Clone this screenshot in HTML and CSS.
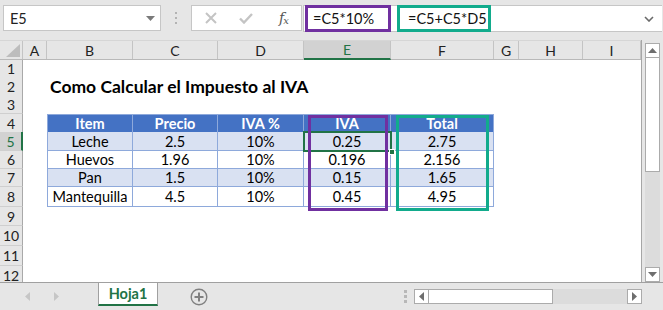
FILE: index.html
```html
<!DOCTYPE html>
<html lang="es">
<head>
<meta charset="utf-8">
<title>Como Calcular el Impuesto al IVA</title>
<link rel="stylesheet" href="styles.css">
</head>
<body>
<div class="app">
  <div class="topbar">
    <div class="namebox">
      <span class="nb-text">E5</span>
      <svg class="nb-arrow" width="9" height="5" viewBox="0 0 9 5"><path d="M0 0H9L4.5 5Z" fill="#7a7a7a"/></svg>
    </div>
    <div class="vdots"><i></i><i></i><i></i></div>
    <div class="fxbtns">
      <svg class="fx-x" width="12" height="12" viewBox="0 0 12 12"><path d="M1 1L11 11M11 1L1 11" stroke="#c4c4c4" stroke-width="2"/></svg>
      <svg class="fx-check" width="14" height="11" viewBox="0 0 14 11"><path d="M1 5.5L5 9.5L13 1" stroke="#c4c4c4" stroke-width="2.4" fill="none"/></svg>
      <span class="fx-label">f<sub>x</sub></span>
    </div>
    <div class="formula">
      <span class="f-box f-purple">=C5*10%</span>
      <span class="f-box f-green">=C5+C5*D5</span>
      <svg class="f-chev" width="10" height="6" viewBox="0 0 10 6"><path d="M1 1L5 5L9 1" stroke="#6a6a6a" stroke-width="1.6" fill="none"/></svg>
    </div>
  </div>

  <div class="main">
    <div class="sheet">
      <div class="row colhead">
        <div class="corner"><svg width="14" height="13" viewBox="0 0 14 13"><path d="M14 0V13H0Z" fill="#bdbdbd"/></svg></div>
        <div class="ch">A</div><div class="ch">B</div><div class="ch">C</div><div class="ch">D</div>
        <div class="ch sel">E</div><div class="ch">F</div><div class="ch">G</div><div class="ch">H</div><div class="ch">I</div>
      </div>
      <div class="row h16"><div class="rh">1</div></div>
      <div class="row h20"><div class="rh">2</div><div class="title">Como Calcular el Impuesto al IVA</div></div>
      <div class="row h18"><div class="rh">3</div></div>
      <div class="row h18"><div class="rh">4</div>
        <div class="tc th first top">Item</div><div class="tc th top">Precio</div><div class="tc th top">IVA %</div><div class="tc th top">IVA</div><div class="tc th top">Total</div>
      </div>
      <div class="row h19"><div class="rh rsel">5</div>
        <div class="tc band first">Leche</div><div class="tc band">2.5</div><div class="tc band">10%</div><div class="tc band">0.25</div><div class="tc band">2.75</div>
      </div>
      <div class="row h18"><div class="rh">6</div>
        <div class="tc first">Huevos</div><div class="tc">1.96</div><div class="tc">10%</div><div class="tc">0.196</div><div class="tc">2.156</div>
      </div>
      <div class="row h18"><div class="rh">7</div>
        <div class="tc band first">Pan</div><div class="tc band">1.5</div><div class="tc band">10%</div><div class="tc band">0.15</div><div class="tc band">1.65</div>
      </div>
      <div class="row h20"><div class="rh">8</div>
        <div class="tc first">Mantequilla</div><div class="tc">4.5</div><div class="tc">10%</div><div class="tc">0.45</div><div class="tc">4.95</div>
      </div>
      <div class="row h19"><div class="rh">9</div></div>
      <div class="row h20"><div class="rh">10</div></div>
      <div class="row h20"><div class="rh">11</div></div>
      <div class="row h20"><div class="rh">12</div></div>

      <div class="selection"><i class="handle"></i></div>
      <div class="mark mark-purple"></div>
      <div class="mark mark-green"></div>
    </div>
    <div class="vscroll">
      <div class="sb-btn"><svg width="9" height="5" viewBox="0 0 9 5"><path d="M4.5 0L9 5H0Z" fill="#6e6e6e"/></svg></div>
      <div class="vthumb"></div>
      <div class="vtrack"></div>
      <div class="sb-btn"><svg width="9" height="5" viewBox="0 0 9 5"><path d="M0 0H9L4.5 5Z" fill="#6e6e6e"/></svg></div>
    </div>
  </div>

  <div class="tabbar">
    <div class="nav">
      <svg width="5" height="9" viewBox="0 0 5 9"><path d="M5 0V9L0 4.5Z" fill="#c6c6c6"/></svg>
      <svg width="5" height="9" viewBox="0 0 5 9"><path d="M0 0V9L5 4.5Z" fill="#c6c6c6"/></svg>
    </div>
    <div class="tab">Hoja1</div>
    <svg class="addsheet" width="18" height="18" viewBox="0 0 18 18"><circle cx="9" cy="9" r="7.8" fill="none" stroke="#808080" stroke-width="1.4"/><path d="M9 4.5V13.5M4.5 9H13.5" stroke="#808080" stroke-width="2"/></svg>
    <div class="spacer"></div>
    <div class="vdots small"><i></i><i></i><i></i></div>
    <div class="hscroll">
      <div class="sb-btn h"><svg width="5" height="9" viewBox="0 0 5 9"><path d="M5 0V9L0 4.5Z" fill="#6e6e6e"/></svg></div>
      <div class="hthumb"></div>
      <div class="htrack"></div>
      <div class="sb-btn h"><svg width="5" height="9" viewBox="0 0 5 9"><path d="M0 0V9L5 4.5Z" fill="#6e6e6e"/></svg></div>
    </div>
  </div>
</div>
</body>
</html>
```

FILE: styles.css
```css
* { box-sizing: border-box; }
html, body { margin: 0; padding: 0; }
body {
  width: 663px;
  height: 310px;
  overflow: hidden;
  background: #e6e6e6;
  font-family: Lato, "Liberation Sans", sans-serif;
  color: #000;
}
.app { width: 663px; height: 310px; display: flex; flex-direction: column; }

/* ---------- top bar ---------- */
.topbar {
  height: 40px;
  flex: none;
  display: flex;
  align-items: flex-start;
  padding: 5px 0 0 3px;
}
.namebox {
  width: 158px;
  height: 26px;
  background: #fff;
  border: 1px solid #c6c6c6;
  display: flex;
  align-items: center;
  justify-content: space-between;
  padding: 0 5px 0 6px;
  font-size: 14.5px;
  color: #222;
}
.vdots {
  width: 30px;
  height: 26px;
  display: flex;
  flex-direction: column;
  align-items: center;
  justify-content: center;
  gap: 3px;
}
.vdots i { display: block; width: 2px; height: 2px; background: #b3b3b3; }
.fxbtns {
  width: 111px;
  height: 26px;
  background: #fff;
  border: 1px solid #c6c6c6;
  display: flex;
  align-items: center;
  padding-left: 13px;
}
.fx-x { margin-right: 22px; }
.fx-check { margin-right: 26px; }
.fx-label {
  font-family: "DejaVu Serif", "Liberation Serif", serif;
  font-style: italic;
  font-size: 14px;
  color: #555;
  letter-spacing: -1px;
}
.fx-label sub { font-size: 10px; vertical-align: -1px; }
.formula {
  margin-left: 1px;
  width: 359px;
  height: 27px;
  background: #fff;
  border: 1px solid #c6c6c6;
  border-right: none;
  display: flex;
  align-items: center;
  padding-left: 1px;
}
.f-box {
  height: 27px;
  margin-top: -1px;
  border: 3px solid;
  font-size: 14.5px;
  color: #111;
  display: flex;
  align-items: center;
}
.f-purple { width: 86px; border-color: #7030a0; padding-left: 5px; }
.f-green { width: 94px; margin-left: 6px; border-color: #12ab8c; padding-left: 8px; }
.f-chev { margin-left: auto; margin-right: 8px; }

/* ---------- sheet ---------- */
.main { flex: 1; display: flex; min-height: 0; }
.sheet {
  position: relative;
  width: 642px;
  height: 242px;
  overflow: hidden;
  background: #fff;
  border-right: 1px solid #a6a6a6;
}
.row {
  display: grid;
  grid-template-columns: 23px 24px 86px 85px 86px 87px 103px 25px 64px 58px;
  font-size: 14.5px;
}
.h16 { height: 16px; }
.h18 { height: 18px; }
.h19 { height: 19px; }
.h20 { height: 20px; }
.colhead {
  height: 20px;
  background: #e6e6e6;
  border-top: 1px solid #d6d6d6;
  border-bottom: 1px solid #b9b9b9;
}
.corner {
  border-right: 1px solid #c4c4c4;
  display: flex;
  align-items: flex-end;
  justify-content: flex-end;
  padding: 0 2px 2px 0;
}
.ch {
  border-right: 1px solid #c4c4c4;
  display: flex;
  align-items: center;
  justify-content: center;
  color: #222;
  font-size: 14px;
}
.ch.sel {
  background: #d2d2d2;
  color: #217346;
  border-bottom: 2px solid #217346;
  margin-bottom: -1px;
}
.rh {
  grid-column: 1;
  background: #e6e6e6;
  border-right: 1px solid #a9a9a9;
  border-bottom: 1px solid #cfcfcf;
  display: flex;
  align-items: center;
  justify-content: center;
  font-size: 14px;
  color: #222;
}
.rh.rsel {
  background: #d2d2d2;
  color: #217346;
  border-right: 2px solid #217346;
}
.title {
  grid-column: 3 / 8;
  font-weight: 700;
  font-size: 17.5px;
  white-space: nowrap;
  display: flex;
  align-items: center;
  padding-left: 3px;
}
.tc {
  border-right: 1px solid #8ea9db;
  border-bottom: 1px solid #8ea9db;
  display: flex;
  align-items: center;
  justify-content: center;
  white-space: nowrap;
}
.tc.first { grid-column: 3; border-left: 1px solid #8ea9db; }
.tc.top { border-top: 1px solid #8ea9db; }
.tc.th { background: #4472c4; color: #fff; font-weight: 700; }
.tc.band { background: #d9e1f2; }

.selection {
  position: absolute;
  left: 303px;
  top: 91px;
  width: 89px;
  height: 21px;
  border: 2px solid #217346;
}
.handle {
  position: absolute;
  right: -5px;
  bottom: -5px;
  width: 6px;
  height: 6px;
  background: #217346;
  border: 1px solid #fff;
}
.mark { position: absolute; top: 75px; height: 96px; border: 3px solid; }
.mark-purple { left: 308px; width: 80px; border-color: #7030a0; }
.mark-green { left: 396px; width: 93px; border-color: #12ab8c; }

/* ---------- vertical scrollbar ---------- */
.vscroll {
  width: 15px;
  margin: 3px 0 0 3px;
  display: flex;
  flex-direction: column;
  background: #dcdcdc;
}
.sb-btn {
  width: 15px;
  height: 15px;
  background: #fff;
  border: 1px solid #ababab;
  display: flex;
  align-items: center;
  justify-content: center;
  flex: none;
}
.vthumb { height: 114px; background: #fff; border: 1px solid #ababab; border-top: none; }
.vtrack { flex: 1; }

/* ---------- tab bar ---------- */
.tabbar {
  height: 28px;
  flex: none;
  border-top: 1px solid #a0a0a0;
  display: flex;
  align-items: flex-start;
}
.nav {
  width: 98px;
  height: 26px;
  display: flex;
  align-items: center;
  padding-left: 25px;
  gap: 24px;
}
.tab {
  width: 60px;
  height: 24px;
  margin-top: -1px;
  background: #fff;
  border: 1px solid #a0a0a0;
  border-top-color: #a0a0a0;
  border-bottom: 2px solid #217346;
  color: #217346;
  font-weight: 700;
  font-size: 14.5px;
  display: flex;
  align-items: center;
  justify-content: center;
}
.addsheet { margin: 5px 0 0 32px; }
.spacer { flex: 1; }
.vdots.small { width: 14px; height: 14px; margin-top: 6px; gap: 2px; }
.vdots.small i { width: 3px; height: 3px; background: #b8b8b8; }
.hscroll {
  width: 228px;
  height: 15px;
  margin: 6px 21px 0 2px;
  display: flex;
  background: #dcdcdc;
}
.sb-btn.h { width: 15px; height: 15px; }
.hthumb { width: 124px; background: #fff; border: 1px solid #ababab; border-left: none; }
.htrack { flex: 1; }
```
